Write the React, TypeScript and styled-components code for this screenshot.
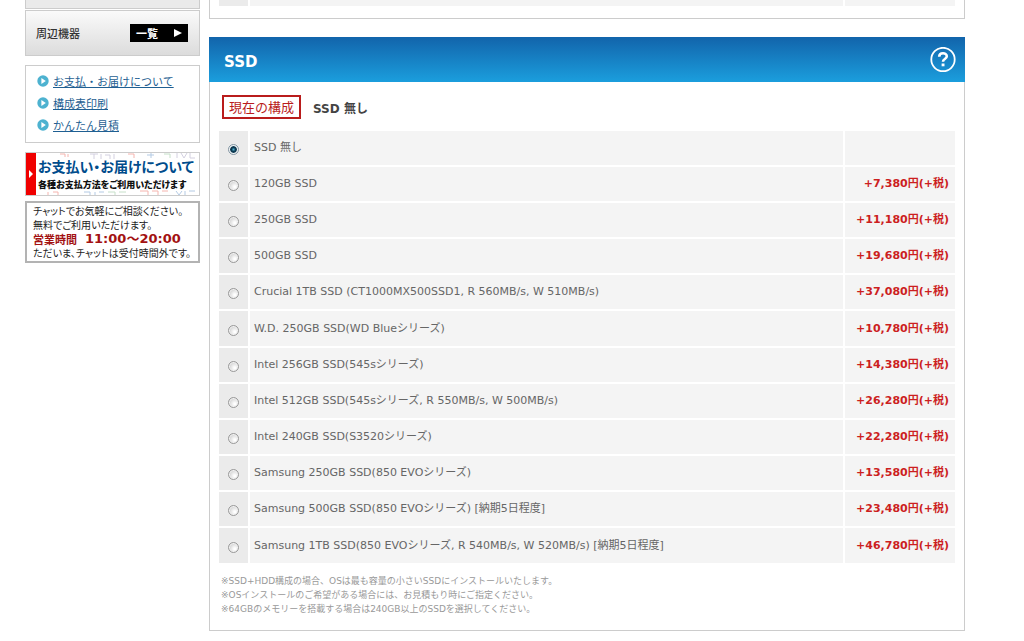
import React, { useState } from "react";
import styled, { createGlobalStyle } from "styled-components";

const GlobalStyle = createGlobalStyle`
  * { box-sizing: border-box; }
  body {
    margin: 0;
    background: #fff;
    color: #666;
    font: 12px/18px "DejaVu Sans", "Noto Sans CJK JP", sans-serif;
  }
`;

const Page = styled.div`
  display: flex;
  align-items: flex-start;
  gap: 9px;
  padding: 0 59px 0 25px;
`;

const Sidebar = styled.aside`
  flex: none;
  width: 175px;
  font-family: "Noto Sans CJK JP", sans-serif;
`;

const Main = styled.main`
  flex: 1;
  min-width: 0;
`;

const MenuEnd = styled.div`
  height: 9px;
  border: 1px solid #ccc;
  border-top: 0;
  background: #eaeaea;
`;

const MenuItem = styled.div`
  display: flex;
  align-items: center;
  justify-content: space-between;
  height: 46px;
  margin-top: 1px;
  padding: 0 11px 0 10px;
  border: 1px solid #ccc;
  background: linear-gradient(#fafafa, #dcdcdc);
  color: #333;
  font-size: 11px;
  font-weight: 500;
`;

const ListButton = styled.button`
  display: flex;
  align-items: center;
  justify-content: space-between;
  width: 58px;
  height: 18px;
  padding: 0 6px;
  border: 0;
  background: #000;
  color: #fff;
  font: 700 11px/18px "Noto Sans CJK JP", sans-serif;
`;

const LinkBox = styled.ul`
  margin: 9px 0 0;
  padding: 4px 11px 6px;
  border: 1px solid #ccc;
  list-style: none;
`;

const LinkItem = styled.li`
  display: flex;
  align-items: center;
  gap: 4px;
  height: 21px;
  margin-bottom: 1px;
  font-size: 11px;
  a { color: #1f5f92; text-underline-offset: 1px; }
`;

const Banner = styled.a`
  position: relative;
  display: flex;
  height: 44px;
  margin-top: 9px;
  border: 1px solid #ccc;
  color: #111;
  text-decoration: none;
  white-space: nowrap;
  overflow: hidden;
`;

const BannerPattern = styled.svg`
  position: absolute;
  inset: 0;
  width: 100%;
  height: 100%;
`;

const BannerTab = styled.span`
  position: relative;
  display: flex;
  flex: none;
  align-items: center;
  justify-content: center;
  width: 10px;
  background: #f00000;
`;

const BannerText = styled.span`
  position: relative;
  display: block;
  padding: 4px 0 0 2px;
  font-size: 9px;
  font-weight: 900;
  line-height: 18px;
  font-feature-settings: "palt";
  strong { display: block; color: #004c8c; font-size: 14px; font-weight: 700; line-height: 19px; }
`;

const ChatBox = styled.div`
  margin-top: 5px;
  padding: 1px 0 1px 6px;
  border: 2px solid #b3b3b3;
  color: #222;
  font-size: 10px;
  line-height: 14px;
  font-feature-settings: "palt";
  white-space: nowrap;
  p { margin: 0; }
`;

const Hours = styled.p`
  display: flex;
  align-items: center;
  gap: 8px;
  height: 14px;
  color: #a31212;
  font-size: 11px;
  font-weight: 700;
  span + span { font-family: "DejaVu Sans", "Noto Sans CJK JP", sans-serif; font-size: 13px; }
`;

const PreviousPanel = styled.section`
  padding: 0 9px 10px;
  border: 1px solid #ccc;
  border-top: 0;
`;

const Panel = styled.section`
  margin-top: 18px;
  border: 1px solid #ccc;
  border-top: 0;
`;

const PanelHeader = styled.header`
  display: flex;
  align-items: center;
  justify-content: space-between;
  height: 45px;
  margin: 0 -1px;
  padding: 0 9px 0 15px;
  background: linear-gradient(#1264ab, #1b9edd);
  color: #fff;
  h2 { margin: 4px 0 0; font-size: 15px; line-height: 20px; }
`;

const HelpButton = styled.button`
  display: flex;
  padding: 0;
  border: 0;
  background: none;
  color: #fff;
`;

const PanelBody = styled.div`
  padding: 13px 9px 14px;
`;

const Current = styled.div`
  display: flex;
  align-items: flex-end;
  gap: 12px;
  margin: 0 0 12px 3px;
  color: #444;
  font-weight: 700;
  line-height: 20px;
`;

const CurrentTag = styled.span`
  width: 79px;
  height: 24px;
  border: 2px solid #b91c1c;
  color: #b91c1c;
  font: 400 13px/19px "Noto Sans CJK JP", sans-serif;
  text-align: center;
`;

const Options = styled.table`
  width: 100%;
  border-collapse: separate;
  border-spacing: 0;
`;

const OptionRow = styled.tr<{ $short?: boolean }>`
  height: ${(p) => (p.$short ? 8 : 36)}px;
  &:nth-child(6n) { height: 37px; }
  td { padding: 0; background: #f4f4f4; border: solid #fff; border-width: 0 0 2px 2px; }
  td:first-child { width: 29px; background: #ebebeb; border-left: 0; text-align: center; }
  td:last-child { width: 112px; }
`;

const Name = styled.label`
  display: block;
  padding-left: 4px;
  font-size: 11px;
`;

const Price = styled.span`
  display: block;
  padding-right: 6px;
  color: #cc1f1f;
  font-size: 11px;
  font-weight: 700;
  text-align: right;
`;

const Radio = styled.input`
  appearance: none;
  display: block;
  width: 11px;
  height: 11px;
  margin: 3px auto 0;
  border: 1px solid #999;
  border-radius: 50%;
  background: radial-gradient(circle at 65% 65%, #fff 10%, #c4c4c4 90%);
  box-shadow: inset 0 0 0 1px #f2f2f2;
  &:checked {
    border-color: #8396a3;
    background: radial-gradient(circle, #4fb3d2 0, #0d3850 2px, #123f58 3px, #e8eff3 4px);
  }
`;

const Notes = styled.div`
  margin-top: 9px;
  padding-left: 2px;
  color: #999;
  font-size: 9px;
  line-height: 14px;
  p { margin: 0; }
`;

const options: [string, string][] = [
  ["SSD 無し", ""],
  ["120GB SSD", "+7,380円(+税)"],
  ["250GB SSD", "+11,180円(+税)"],
  ["500GB SSD", "+19,680円(+税)"],
  ["Crucial 1TB SSD (CT1000MX500SSD1, R 560MB/s, W 510MB/s)", "+37,080円(+税)"],
  ["W.D. 250GB SSD(WD Blueシリーズ)", "+10,780円(+税)"],
  ["Intel 256GB SSD(545sシリーズ)", "+14,380円(+税)"],
  ["Intel 512GB SSD(545sシリーズ, R 550MB/s, W 500MB/s)", "+26,280円(+税)"],
  ["Intel 240GB SSD(S3520シリーズ)", "+22,280円(+税)"],
  ["Samsung 250GB SSD(850 EVOシリーズ)", "+13,580円(+税)"],
  ["Samsung 500GB SSD(850 EVOシリーズ) [納期5日程度]", "+23,480円(+税)"],
  ["Samsung 1TB SSD(850 EVOシリーズ, R 540MB/s, W 520MB/s) [納期5日程度]", "+46,780円(+税)"],
];

const links = ["お支払・お届けについて", "構成表印刷", "かんたん見積"];

const LinkIcon = () => (
  <svg width="12" height="12" viewBox="0 0 12 12" aria-hidden="true">
    <circle cx="6" cy="6" r="5.7" fill="#4db2d0" />
    <path d="M4.4 3 8.8 6 4.4 9z" fill="#fff" />
  </svg>
);

export default function App() {
  const [selected, setSelected] = useState(0);
  return (
    <Page lang="ja">
      <GlobalStyle />
      <Sidebar>
        <MenuEnd />
        <MenuItem>
          周辺機器
          <ListButton type="button">
            一覧
            <svg width="8" height="8" viewBox="0 0 8 8" aria-hidden="true">
              <path d="M0 0 8 4 0 8z" fill="#fff" />
            </svg>
          </ListButton>
        </MenuItem>
        <LinkBox>
          {links.map((text) => (
            <LinkItem key={text}>
              <LinkIcon />
              <a href="#">{text}</a>
            </LinkItem>
          ))}
        </LinkBox>
        <Banner href="#">
          <BannerPattern viewBox="0 0 173 42" fill="none" aria-hidden="true">
            <path d="M64 1h8m-4 0v5m7-5v5m4-4h5v4m4-5v5M151 0v5m4-5 3 5 3-5m3 0v5h5" stroke="#d3d0e0" />
            <path d="M34 1h5v3m3-3v3m60-3h6v4M22 39v3m5-3h5v3m82-4h8v4m4-4h6v4m4-4h6" stroke="#f5b4ae" />
            <path d="M121 2h7m-3-2v5M58 39h6v3m5-3v3m4-3h5M150 38l3 4 3-4m3 0v4m4-4h6" stroke="#b3cae4" />
            <path d="M82 39h7v3m4-3h7M138 1h6v4" stroke="#c6e0c9" />
          </BannerPattern>
          <BannerTab>
            <svg width="4" height="8" viewBox="0 0 4 8" aria-hidden="true">
              <path d="M0 0 4 4 0 8z" fill="#fff" />
            </svg>
          </BannerTab>
          <BannerText>
            <strong>お支払い・お届けについて</strong>
            各種お支払方法をご利用いただけます
          </BannerText>
        </Banner>
        <ChatBox>
          <p>チャットでお気軽にご相談ください。</p>
          <p>無料でご利用いただけます。</p>
          <Hours>
            <span>営業時間</span>
            <span>11:00〜20:00</span>
          </Hours>
          <p>ただいま、チャットは受付時間外です。</p>
        </ChatBox>
      </Sidebar>
      <Main>
        <PreviousPanel>
          <Options>
            <tbody>
              <OptionRow $short>
                <td />
                <td />
                <td />
              </OptionRow>
            </tbody>
          </Options>
        </PreviousPanel>
        <Panel>
          <PanelHeader>
            <h2>SSD</h2>
            <HelpButton type="button" aria-label="ヘルプ">
              <svg width="26" height="26" viewBox="0 0 26 26" fill="none" stroke="#fff" aria-hidden="true">
                <circle cx="13" cy="12.5" r="11.7" strokeWidth="1.8" />
                <path d="M9.2 9.7C9.2 5.1 16.8 5.3 16.8 9.3c0 2.8-3.8 2.7-3.8 5.4" strokeWidth="2.6" />
                <path d="M11.6 16.5h2.9v2.8h-2.9z" fill="#fff" stroke="none" />
              </svg>
            </HelpButton>
          </PanelHeader>
          <PanelBody>
            <Current>
              <CurrentTag>現在の構成</CurrentTag>
              <span>SSD 無し</span>
            </Current>
            <Options>
              <tbody>
                {options.map(([name, price], i) => (
                  <OptionRow key={name}>
                    <td>
                      <Radio
                        type="radio"
                        name="ssd"
                        id={`ssd-${i}`}
                        checked={selected === i}
                        onChange={() => setSelected(i)}
                      />
                    </td>
                    <td>
                      <Name htmlFor={`ssd-${i}`}>{name}</Name>
                    </td>
                    <td>
                      <Price>{price}</Price>
                    </td>
                  </OptionRow>
                ))}
              </tbody>
            </Options>
            <Notes>
              <p>※SSD+HDD構成の場合、OSは最も容量の小さいSSDにインストールいたします。</p>
              <p>※OSインストールのご希望がある場合には、お見積もり時にご指定ください。</p>
              <p>※64GBのメモリーを搭載する場合は240GB以上のSSDを選択してください。</p>
            </Notes>
          </PanelBody>
        </Panel>
      </Main>
    </Page>
  );
}
